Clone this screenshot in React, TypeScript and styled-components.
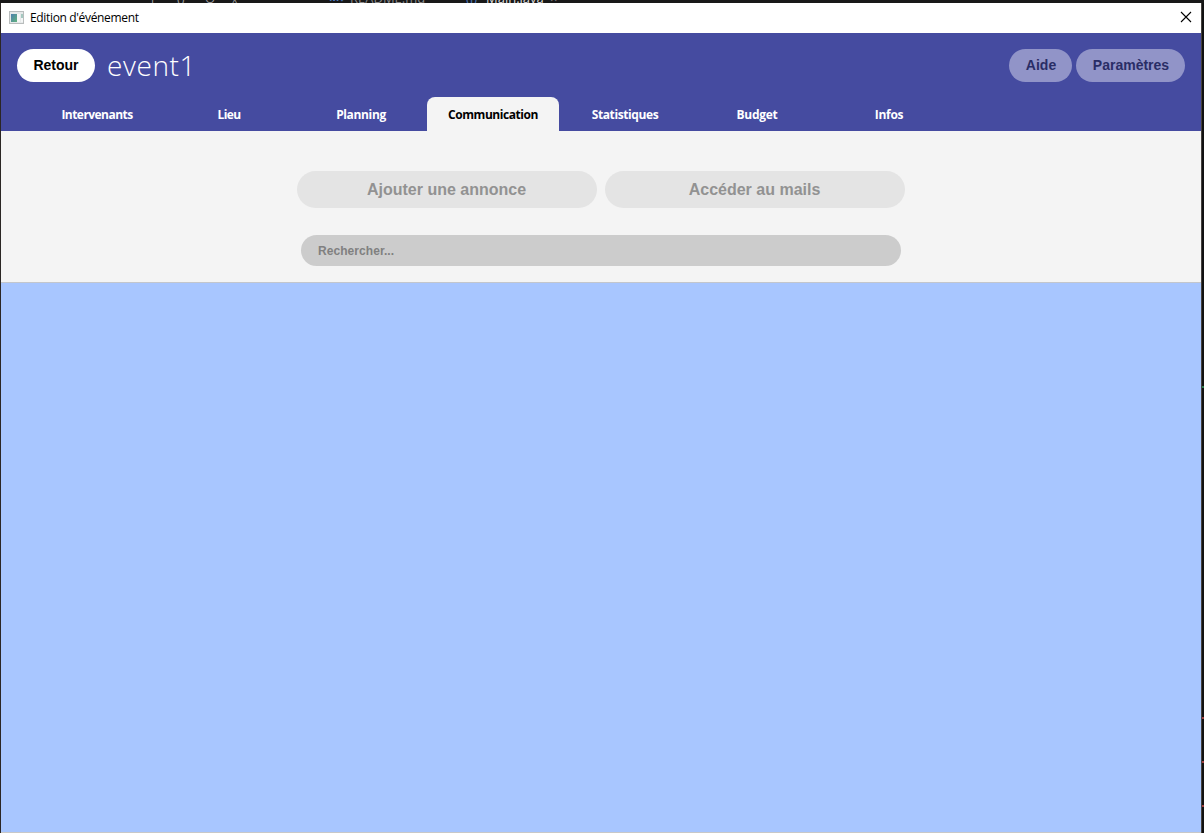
import React from "react";
import styled, { createGlobalStyle } from "styled-components";

const GlobalStyle = createGlobalStyle`
  * { box-sizing: border-box; }
  body { margin: 0; background: #1a1a1a; overflow: hidden; }
  button, input { border: 0; outline: 0; margin: 0; padding: 0; }
`;

const Desktop = styled.div`
  width: 1204px;
  height: 833px;
  display: flex;
  flex-direction: column;
  background: #1a1a1a;
  overflow: hidden;
`;

const EditorStrip = styled.div`
  height: 3px;
  flex: none;
  display: flex;
  align-items: flex-end;
  overflow: hidden;
  background: #181818;
  padding-left: 149px;
`;

const StripPart = styled.span<{ $width: number; $color: string; $bold?: boolean; $size?: number; $drop?: number }>`
  flex: none;
  width: ${(p) => p.$width}px;
  height: 14px;
  margin-bottom: ${(p) => -(p.$drop ?? 0)}px;
  color: ${(p) => p.$color};
  font: ${(p) => (p.$bold ? 700 : 400)} ${(p) => p.$size ?? 13}px/14px "Open Sans", sans-serif;
  white-space: pre;
`;

const Middle = styled.div`
  flex: 1;
  display: flex;
  min-height: 0;
`;

const LeftEdge = styled.div`
  width: 1px;
  background: #2b2624;
`;

const RightEdge = styled.div`
  width: 3px;
  border-left: 1px solid #45413d;
  background: #111;
  display: flex;
  flex-direction: column;
`;

const EdgeMark = styled.i<{ $gap: number; $color: string }>`
  display: block;
  width: 2px;
  height: 2px;
  margin-top: ${(p) => p.$gap}px;
  background: ${(p) => p.$color};
`;

const Window = styled.main`
  width: 1200px;
  display: flex;
  flex-direction: column;
  background: #f4f4f4;
`;

const TitleBar = styled.div`
  height: 30px;
  flex: none;
  display: flex;
  align-items: center;
  background: #fff;
  padding: 0 9px 2px 8px;
`;

const WindowTitle = styled.span`
  flex: 1;
  padding-top: 2px;
  margin-left: 6px;
  font: 400 12px/16px "Open Sans", sans-serif;
  letter-spacing: -0.34px;
  color: #000;
`;

const Header = styled.header`
  height: 98px;
  flex: none;
  display: flex;
  flex-direction: column;
  justify-content: space-between;
  background: #454ba0;
`;

const HeaderRow = styled.div`
  display: flex;
  align-items: center;
  height: 33px;
  margin: 16px 16px 0;
`;

const PillButton = styled.button<{ $width: number; $muted?: boolean }>`
  width: ${(p) => p.$width}px;
  height: 33px;
  border-radius: 17px;
  padding: ${(p) => (p.$muted ? "0 0 1px 1px" : "0 0 1px")};
  background: ${(p) => (p.$muted ? "#9194c8" : "#fff")};
  color: ${(p) => (p.$muted ? "#292d66" : "#000")};
  font: 700 14px/16px "Liberation Sans", Arial, sans-serif;
`;

const EventName = styled.h1`
  flex: 1;
  margin: 0 0 0 12px;
  color: #fff;
  font: 350 28px/33px "Open Sans", sans-serif;
  letter-spacing: 0.6px;
`;

const HeaderActions = styled.div`
  display: flex;
  gap: 4px;
`;

const Tabs = styled.nav`
  display: flex;
  padding-left: 30px;
`;

const Tab = styled.button<{ $active?: boolean; $spacing: number }>`
  width: 132px;
  height: 34px;
  padding-top: 1px;
  border-radius: 8px 8px 0 0;
  background: ${(p) => (p.$active ? "#f4f4f4" : "transparent")};
  color: ${(p) => (p.$active ? "#000" : "#fff")};
  font: 700 12px/16px "Open Sans", sans-serif;
  letter-spacing: ${(p) => p.$spacing}px;
`;

const Toolbar = styled.section`
  height: 151px;
  flex: none;
  display: flex;
  flex-direction: column;
  align-items: center;
  padding-top: 40px;
`;

const ActionRow = styled.div`
  display: flex;
  gap: 8px;
  margin-bottom: 27px;
`;

const ActionButton = styled.button`
  width: 300px;
  height: 37px;
  border-radius: 19px;
  padding-right: 1px;
  background: #e4e4e4;
  color: #929292;
  font: 700 16px/18px "Liberation Sans", Arial, sans-serif;
`;

const SearchField = styled.input`
  width: 600px;
  height: 31px;
  border-radius: 16px;
  padding: 0 17px;
  background: #ccc;
  color: #333;
  font: 700 12px/16px "Liberation Sans", Arial, sans-serif;
  letter-spacing: 0.06px;
  &::placeholder { color: #808080; opacity: 1; }
`;

const Announcements = styled.section`
  flex: 1;
  background: #a8c6ff;
  border-top: 1px solid #c3c6cc;
  border-bottom: 1px solid #c8c8c8;
`;

const WindowIcon = () => (
  <svg width="15" height="13" viewBox="0 0 15 13" shapeRendering="crispEdges">
    <defs>
      <linearGradient id="screen" x1="0" y1="0" x2="1" y2="1">
        <stop offset="0" stopColor="#4b7fae" />
        <stop offset="1" stopColor="#62b27d" />
      </linearGradient>
    </defs>
    <rect width="15" height="13" fill="#b9bdbd" />
    <rect x="1" y="1" width="13" height="11" fill="#e6e9ea" />
    <rect x="2" y="3" width="6" height="8" fill="url(#screen)" />
    <rect x="8" y="3" width="3" height="8" fill="#f4f6f6" />
    <rect x="12" y="3" width="2" height="4" fill="#a5c8c0" />
    <rect x="12" y="7" width="2" height="4" fill="#f4f6f6" />
  </svg>
);

const CloseIcon = () => (
  <svg width="12" height="12" viewBox="0 0 12 12" fill="none" stroke="#000" strokeWidth="1.1">
    <path d="M1 1L11 11M11 1L1 11" />
  </svg>
);

const tabs = [
  { label: "Intervenants", spacing: -0.55 },
  { label: "Lieu", spacing: -0.6 },
  { label: "Planning", spacing: -0.35 },
  { label: "Communication", spacing: -0.45, active: true },
  { label: "Statistiques", spacing: -0.4 },
  { label: "Budget", spacing: -0.3 },
  { label: "Infos", spacing: -0.3 },
];

export default function App() {
  return (
    <>
      <GlobalStyle />
      <Desktop>
        <EditorStrip>
          <StripPart $width={28} $color="#aaa" $drop={3}>|</StripPart>
          <StripPart $width={28} $color="#999" $drop={2}>()</StripPart>
          <StripPart $width={26} $color="#999" $drop={2}>O</StripPart>
          <StripPart $width={98} $color="#999" $drop={7}>^</StripPart>
          <StripPart $width={21} $color="#4c79bd" $bold $size={11} $drop={1}>M↓</StripPart>
          <StripPart $width={116} $color="#8a8a8a" $drop={2}>README.md</StripPart>
          <StripPart $width={20} $color="#4c79bd" $drop={2}>(J)</StripPart>
          <StripPart $width={64} $color="#ddd" $drop={2}>Main.java</StripPart>
          <StripPart $width={17} $color="#888" $drop={2}>×</StripPart>
        </EditorStrip>
        <Middle>
          <LeftEdge />
          <Window>
            <TitleBar>
              <WindowIcon />
              <WindowTitle>Edition d'événement</WindowTitle>
              <CloseIcon />
            </TitleBar>
            <Header>
              <HeaderRow>
                <PillButton $width={78}>Retour</PillButton>
                <EventName>event1</EventName>
                <HeaderActions>
                  <PillButton $width={63} $muted>Aide</PillButton>
                  <PillButton $width={109} $muted>Paramètres</PillButton>
                </HeaderActions>
              </HeaderRow>
              <Tabs>
                {tabs.map((t) => (
                  <Tab key={t.label} $active={t.active} $spacing={t.spacing}>{t.label}</Tab>
                ))}
              </Tabs>
            </Header>
            <Toolbar>
              <ActionRow>
                <ActionButton>Ajouter une annonce</ActionButton>
                <ActionButton>Accéder au mails</ActionButton>
              </ActionRow>
              <SearchField placeholder="Rechercher..." />
            </Toolbar>
            <Announcements />
          </Window>
          <RightEdge>
            <EdgeMark $gap={383} $color="#2f7a4c" />
            <EdgeMark $gap={329} $color="#a04040" />
            <EdgeMark $gap={42} $color="#a04040" />
            <EdgeMark $gap={42} $color="#a04040" />
          </RightEdge>
        </Middle>
      </Desktop>
    </>
  );
}
